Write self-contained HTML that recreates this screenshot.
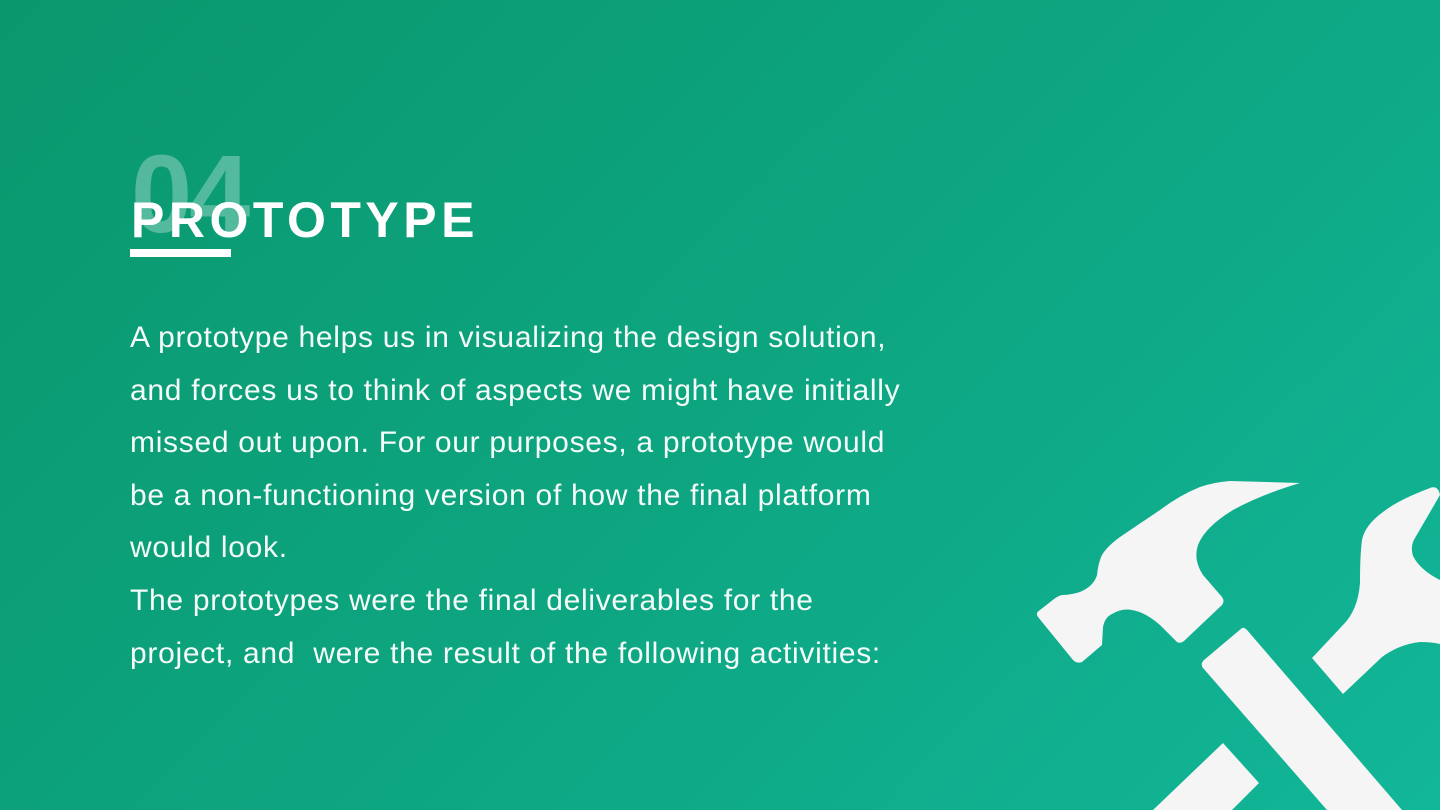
<!DOCTYPE html>
<html><head><style>
html,body{margin:0;padding:0}
body{width:1440px;height:810px;overflow:hidden;position:relative;background:linear-gradient(135deg,#0a976d 0%,#0da580 50%,#12b699 100%);font-family:"Liberation Sans",sans-serif;color:#fff}
.num{position:absolute;left:131px;top:140px;font-size:110px;font-weight:bold;color:rgba(255,255,255,0.3);line-height:1;letter-spacing:-3px}
.title{position:absolute;left:131px;top:195px;font-size:50px;font-weight:bold;letter-spacing:4.5px;line-height:1}
.bar{position:absolute;left:130px;top:249px;width:101px;height:8px;background:#fff}
.body{position:absolute;left:130px;top:312px;font-size:30px;letter-spacing:0.7px;line-height:52.6px;width:900px;color:#f4fbf8}
</style></head><body>
<div class="num">04</div>
<div class="title">PROTOTYPE</div>
<div class="bar"></div>
<div class="body">A prototype helps us in visualizing the design solution,<br>and forces us to think of aspects we might have initially<br>missed out upon. For our purposes, a prototype would<br>be a non-functioning version of how the final platform<br>would look.<br>The prototypes were the final deliverables for the<br>project, and&nbsp; were the result of the following activities:</div>
<svg style="position:absolute;left:0;top:0" width="1440" height="810" viewBox="0 0 1440 810">
<g fill="#f5f5f5">
<path d="M1038 617 L1073 660 Q1077 664 1082 662 L1102 645 L1103 627 Q1105 617 1112 614 Q1122 608 1132 610 Q1145 612 1160 625 L1177 642 Q1180 644 1184 641 L1222 605 Q1225 601 1222 597 L1203 575 Q1193 560 1198 545 Q1205 527 1233 510 Q1260 495 1300 483 L1230 481 Q1215 482 1200 487 Q1180 495 1160 510 L1120 537 Q1105 548 1101 557 Q1098 565 1097 575 Q1094 586 1080 592 Q1070 595 1062 595 Q1058 596 1054 599 L1040 610 Q1035 613 1038 617 Z"/>
<path d="M1242 628 L1204 660 Q1200 664 1203 668 L1327 810 L1402 810 L1247 630 Q1244 627 1242 628 Z"/>
<path d="M1312 658 L1343 694 L1382 657 Q1400 644 1420 642 Q1432 642 1440 644 L1440 580 Q1420 570 1413 556 Q1410 546 1415 538 L1440 495 Q1438 485 1430 488 Q1398 500 1383 512 Q1365 525 1362 540 Q1360 555 1360 583 Q1358 610 1343 625 Z"/>
<path d="M1223 743 L1259 783 L1232 810 L1153 810 Z"/>
</g></svg>
</body></html>
